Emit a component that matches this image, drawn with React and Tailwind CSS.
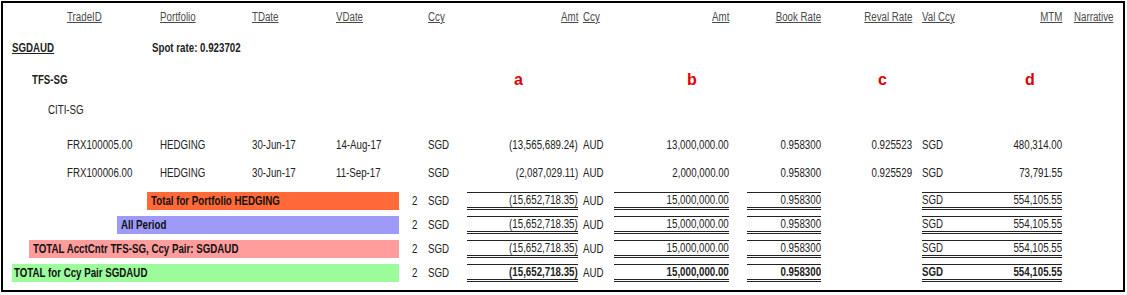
const font = "font-['Liberation_Sans',Arial,sans-serif]";
const cols =
    'grid grid-cols-[397px_28px_39px_111px_5px_31px_115px_18px_74px_91px_10px_140px_12px_1fr] items-center';

// Arial Narrow look: Liberation Sans squeezed horizontally
const N = ({ children, right, className = '' }) => (
    <span
        className={`inline-block whitespace-nowrap [transform:scaleX(0.81)] ${right ? 'origin-right' : 'origin-left'} ${className}`}
    >
        {children}
    </span>
);

// header label, underlined
const H = ({ children, right }) => (
    <N right={right} className="underline">
        {children}
    </N>
);

const trades = [
    {
        id: 'FRX100005.00',
        portfolio: 'HEDGING',
        tdate: '30-Jun-17',
        vdate: '14-Aug-17',
        ccy: 'SGD',
        amt: '(13,565,689.24)',
        ccy2: 'AUD',
        amt2: '13,000,000.00',
        book: '0.958300',
        reval: '0.925523',
        valCcy: 'SGD',
        mtm: '480,314.00',
        h: 'h-[38px]',
    },
    {
        id: 'FRX100006.00',
        portfolio: 'HEDGING',
        tdate: '30-Jun-17',
        vdate: '11-Sep-17',
        ccy: 'SGD',
        amt: '(2,087,029.11)',
        ccy2: 'AUD',
        amt2: '2,000,000.00',
        book: '0.958300',
        reval: '0.925529',
        valCcy: 'SGD',
        mtm: '73,791.55',
        h: 'h-[18px]',
    },
];

const totals = [
    { label: 'Total for Portfolio HEDGING', band: 'ml-[144px] bg-[#ff6a38] pl-1', bold: false },
    { label: 'All Period', band: 'ml-[114px] bg-[#9d9bf7] pl-1', bold: false },
    { label: 'TOTAL AcctCntr TFS-SG, Ccy Pair: SGDAUD', band: 'ml-[26px] bg-[#ff9c9c] pl-1', bold: false },
    { label: 'TOTAL for Ccy Pair SGDAUD', band: 'ml-[9px] bg-[#9cfc9c] pl-[2px]', bold: true },
];

const lined = 'h-[18px] border-t border-b-[3px] border-double border-[#222] flex items-center';
const marker = 'text-[16px] font-bold text-[#e00000]';

const App = () => {
    return (
        <div className={`w-[1124px] h-[291px] ml-px mt-px border-2 border-black bg-white text-[12px] text-[#222] ${font}`}>
            {/* Header */}
            <div className={`${cols} h-[27px] text-[#4a4a4a]`}>
                <div className="flex pl-[64px]">
                    <span className="w-[93px]"><H>TradeID</H></span>
                    <span className="w-[92px]"><H>Portfolio</H></span>
                    <span className="w-[84px]"><H>TDate</H></span>
                    <span><H>VDate</H></span>
                </div>
                <div />
                <div><H>Ccy</H></div>
                <div className="text-right"><H right>Amt</H></div>
                <div />
                <div><H>Ccy</H></div>
                <div className="text-right"><H right>Amt</H></div>
                <div />
                <div className="text-right"><H right>Book Rate</H></div>
                <div className="text-right"><H right>Reval Rate</H></div>
                <div />
                <div className="flex justify-between">
                    <span><H>Val Ccy</H></span>
                    <span><H right>MTM</H></span>
                </div>
                <div />
                <div><H>Narrative</H></div>
            </div>

            {/* Currency pair */}
            <div className="h-[36px] flex items-center font-bold">
                <span className="w-[149px] pl-[9px]"><N className="underline">SGDAUD</N></span>
                <span><N>Spot rate: 0.923702</N></span>
            </div>

            {/* Account centre + markers */}
            <div className={`${cols} h-[28px]`}>
                <div className="pl-[29px] font-bold"><N>TFS-SG</N></div>
                <div />
                <div />
                <div className={`pl-[47px] ${marker}`}>a</div>
                <div />
                <div />
                <div className={`pl-[73px] ${marker}`}>b</div>
                <div />
                <div />
                <div className={`pl-[57px] ${marker}`}>c</div>
                <div />
                <div className={`pl-[103px] ${marker}`}>d</div>
                <div />
                <div />
            </div>

            <div className="h-[32px] flex items-center pl-[45px]"><N>CITI-SG</N></div>

            {/* Trades */}
            {trades.map((t) => (
                <div key={t.id} className={`${cols} ${t.h}`}>
                    <div className="flex pl-[64px]">
                        <span className="w-[93px]"><N>{t.id}</N></span>
                        <span className="w-[92px]"><N>{t.portfolio}</N></span>
                        <span className="w-[84px]"><N>{t.tdate}</N></span>
                        <span><N>{t.vdate}</N></span>
                    </div>
                    <div />
                    <div><N>{t.ccy}</N></div>
                    <div className="text-right"><N right>{t.amt}</N></div>
                    <div />
                    <div><N>{t.ccy2}</N></div>
                    <div className="text-right"><N right>{t.amt2}</N></div>
                    <div />
                    <div className="text-right"><N right>{t.book}</N></div>
                    <div className="text-right"><N right>{t.reval}</N></div>
                    <div />
                    <div className="flex justify-between">
                        <span><N>{t.valCcy}</N></span>
                        <span><N right>{t.mtm}</N></span>
                    </div>
                    <div />
                    <div />
                </div>
            ))}

            {/* Totals */}
            <div className="mt-[10px] flex flex-col gap-[6px]">
                {totals.map((r) => {
                    const b = r.bold ? 'font-bold' : '';
                    return (
                        <div key={r.label} className={`${cols} h-[18px]`}>
                            <div className={`h-[18px] mr-px flex items-center font-bold text-[#111] ${r.band}`}>
                                <N>{r.label}</N>
                            </div>
                            <div className="pl-[12px]"><N>2</N></div>
                            <div><N>SGD</N></div>
                            <div className={`${lined} justify-end ${b}`}><N right>(15,652,718.35)</N></div>
                            <div />
                            <div><N>AUD</N></div>
                            <div className={`${lined} justify-end ${b}`}><N right>15,000,000.00</N></div>
                            <div />
                            <div className={`${lined} justify-end ${b}`}><N right>0.958300</N></div>
                            <div />
                            <div />
                            <div className={`${lined} justify-between ${b}`}>
                                <N>SGD</N>
                                <N right>554,105.55</N>
                            </div>
                            <div />
                            <div />
                        </div>
                    );
                })}
            </div>
        </div>
    );
};

export default App;
